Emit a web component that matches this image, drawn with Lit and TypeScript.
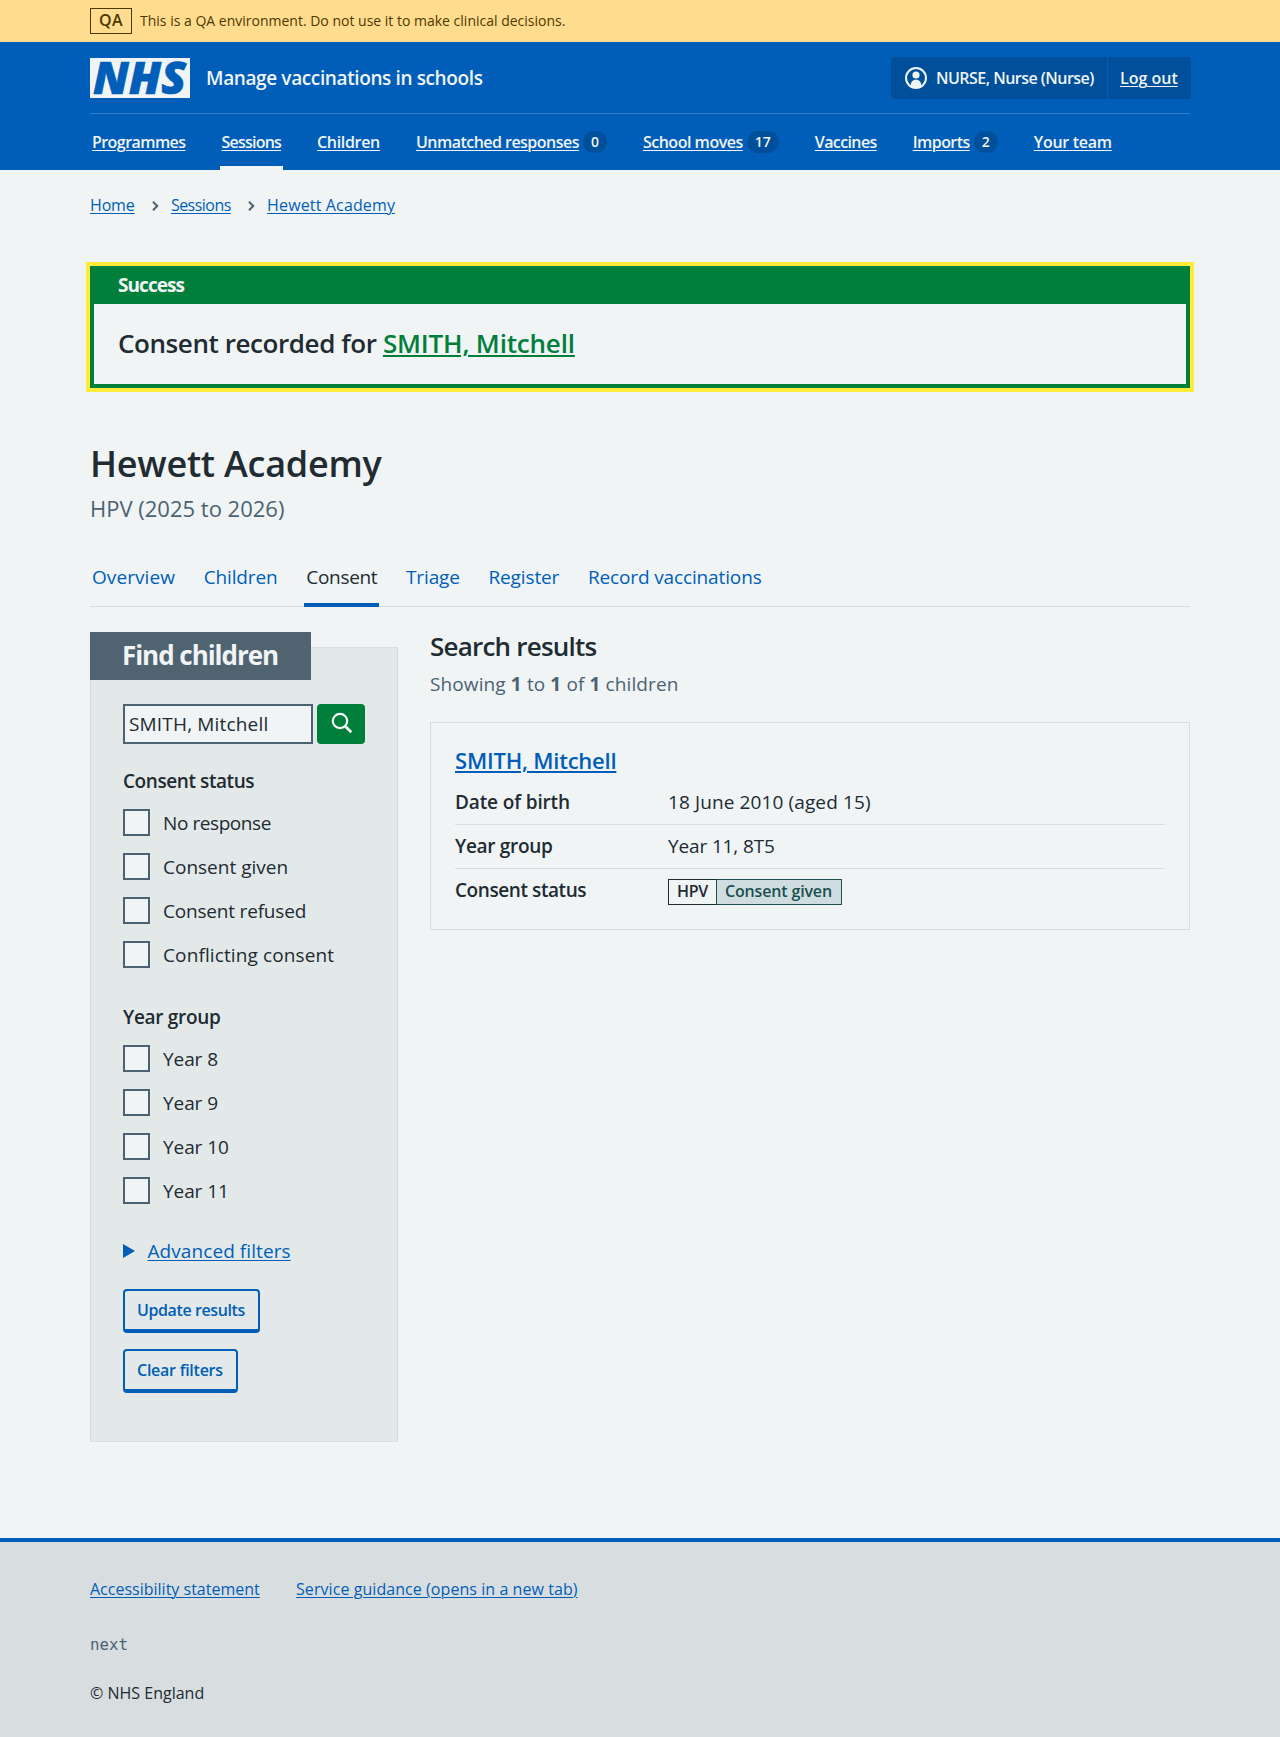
import { LitElement, html, css } from "lit";
import { customElement } from "lit/decorators.js";
import { classMap } from "lit/directives/class-map.js";

interface Item {
  label: string;
  /** tracking class */
  c: string;
  count?: string;
  current?: boolean;
}

const NAV: Item[] = [
  { label: "Programmes", c: "n35" },
  { label: "Sessions", c: "n49", current: true },
  { label: "Children", c: "n20" },
  { label: "Unmatched responses", c: "n33", count: "0" },
  { label: "School moves", c: "n30", count: "17" },
  { label: "Vaccines", c: "n38" },
  { label: "Imports", c: "n35", count: "2" },
  { label: "Your team", c: "n18" },
];
const TABS: Item[] = [
  { label: "Overview", c: "p4" },
  { label: "Children", c: "n6" },
  { label: "Consent", c: "n16", current: true },
  { label: "Triage", c: "n6" },
  { label: "Register", c: "n6" },
  { label: "Record vaccinations", c: "n6" },
];
const STATUSES: Item[] = [
  { label: "No response", c: "n22" },
  { label: "Consent given", c: "" },
  { label: "Consent refused", c: "n10" },
  { label: "Conflicting consent", c: "p6" },
];
const YEARS: Item[] = ["Year 8", "Year 9", "Year 10", "Year 11"].map((label) => ({ label, c: "n4" }));

@customElement("app-root")
export class AppRoot extends LitElement {
  static styles = css`
    :host { display: block; min-height: 1737px; background: #f0f4f5; color: #212b32; font-family: "Open Sans", "Noto Sans", sans-serif; font-size: 19px; line-height: 28px; }
    * { box-sizing: border-box; }
    h1, h2, h3, p, ul, dl, dd, dt { margin: 0; padding: 0; font-weight: inherit; font-size: inherit; }
    ul { list-style: none; }
    a { color: #005eb8; text-underline-offset: 1.5px; text-decoration-thickness: 1px; white-space: nowrap; }
    span, h1, h2, h3 { white-space: nowrap; }
    .p4 { letter-spacing: 0.004em; }
    .p6 { letter-spacing: 0.006em; }
    .p9 { letter-spacing: 0.009em; }
    .n4 { letter-spacing: -0.004em; }
    .n6 { letter-spacing: -0.007em; }
    .n10 { letter-spacing: -0.01em; }
    .n16 { letter-spacing: -0.016em; }
    .n18 { letter-spacing: -0.018em; }
    .n20 { letter-spacing: -0.02em; }
    .n22 { letter-spacing: -0.022em; }
    .n25 { letter-spacing: -0.025em; }
    .n30 { letter-spacing: -0.03em; }
    .n33 { letter-spacing: -0.033em; }
    .n35 { letter-spacing: -0.035em; }
    .n38 { letter-spacing: -0.038em; }
    .n40 { letter-spacing: -0.04em; }
    .n49 { letter-spacing: -0.049em; }
    .wrap { width: 1100px; margin: 0 auto; }
    .env { height: 42px; background: #ffdc8e; color: #4d3900; }
    .env .wrap { display: flex; align-items: center; gap: 8px; height: 42px; font-size: 14px; }
    .envtag { width: 42px; height: 26px; border: 1px solid #4d3900; text-align: center; line-height: 23px; font-size: 16px; font-weight: 600; letter-spacing: 0.02em; }
    .head { height: 128px; background: #005eb8; color: #f0f4f5; }
    .head a { color: #f0f4f5; }
    .top { height: 72px; padding-top: 15px; border-bottom: 1px solid #337ec6; display: flex; }
    .logo { display: block; margin-top: 1px; overflow: visible; }
    .service { margin: 6.5px 0 0 16px; font-weight: 600; }
    .account { margin: 0 -1px 0 auto; width: 300px; height: 42px; border-radius: 4px; background: #004f9a; display: flex; font-size: 16px; font-weight: 600; line-height: 42px; }
    .user { width: 217px; border-right: 1px solid #005eb8; padding-left: 14px; display: flex; align-items: center; gap: 9px; }
    .out { padding-left: 12px; }
    .nav { display: flex; gap: 32px; font-size: 16px; font-weight: 600; height: 56px; }
    .nav li { display: flex; align-items: center; gap: 4px; padding: 3px 2px 0; border-bottom: 4px solid transparent; }
    .nav li.current { border-bottom-color: #f0f4f5; }
    .count { height: 22px; min-width: 24px; padding: 0 8px; border-radius: 12px; background: #004f9a; font-size: 14px; line-height: 22px; text-align: center; }
    .crumbs { display: flex; align-items: flex-start; font-size: 16px; line-height: 24px; padding-top: 23px; height: 96px; }
    .chev { width: 7px; height: 10px; margin: 7.5px 12.3px 0 17px; }
    .banner { height: 122px; border: 4px solid #007f3b; border-top: 0; outline: 4px solid #ffeb3b; }
    .bhead { height: 38px; padding-left: 24px; background: #007f3b; color: #f0f4f5; font-weight: 700; line-height: 39px; }
    .bbody { padding: 21px 24px; font-size: 26px; line-height: 36px; font-weight: 600; }
    .bbody a { color: #007f3b; text-decoration-thickness: 2px; text-underline-offset: 2px; }
    .title { margin-top: 54px; font-size: 36px; font-weight: 600; line-height: 44px; }
    .caption { font-size: 22px; line-height: 32px; color: #4c6272; margin-top: 6px; }
    .tabrow { margin-top: 32px; height: 51px; box-shadow: inset 0 -1px #d8dde0; display: flex; gap: 24.7px; }
    .tabrow li { padding: 7px 2px 0; color: #005eb8; border-bottom: 4px solid transparent; }
    .tabrow li.current { color: #212b32; border-color: #005eb8; }
    .cols { display: grid; grid-template-columns: 308px 760px; gap: 32px; align-items: start; margin-top: 25px; }
    .side { margin-top: 15px; height: 795px; border: 1px solid #d8dde0; background: #e3e9e9; padding: 0 32px; }
    .sidehead { width: 221px; height: 48px; margin: -16px 0 0 -33px; padding-left: 32px; background: #4f6371; color: #f0f4f5; font-size: 26px; font-weight: 700; line-height: 46px; }
    .search { display: flex; gap: 4px; margin-top: 24px; }
    .input { width: 190px; height: 40px; border: 2px solid #4c6272; background: #f0f4f5; padding-left: 4px; line-height: 36px; }
    .go { width: 48px; height: 40px; border-radius: 4px; background: #007f3b; }
    .go svg { display: block; }
    .legend { font-weight: 600; margin-top: 23px; }
    .checks { display: grid; gap: 17px; margin-top: 14px; }
    .checks li { display: flex; gap: 13px; height: 27px; }
    .box { width: 27px; height: 27px; border: 2px solid #4c6272; background: #f0f4f5; }
    .checks + .legend { margin-top: 34.5px; }
    .checks .lab { line-height: 29px; }
    .more { display: flex; align-items: center; margin-top: 33px; gap: 12.5px; }
    .btn { display: block; height: 44px; border: 2px solid #005eb8; border-bottom-width: 4px; border-radius: 4px; color: #005eb8; font-size: 16px; font-weight: 600; line-height: 38px; padding-left: 12px; }
    .b1 { width: 137px; margin-top: 24.5px; }
    .b2 { width: 115px; margin-top: 16px; }
    .h2 { font-size: 26px; font-weight: 600; line-height: 36px; margin-top: -4px; }
    .showing { color: #4c6272; margin-top: 6px; }
    .showing b { font-weight: 700; }
    .card { margin-top: 24px; height: 208px; border: 1px solid #d8dde0; padding: 22px 24px; }
    .name { font-size: 22px; font-weight: 600; line-height: 30px; margin-bottom: 2px; }
    .name a { text-decoration-thickness: 2px; }
    .row { display: grid; grid-template-columns: 213px 1fr; height: 44px; border-bottom: 1px solid #d8dde0; line-height: 42px; }
    .row:first-child { height: 48px; padding-top: 4px; }
    .row:last-child { border: 0; }
    .k { font-weight: 600; }
    .tag { display: flex; padding-top: 10px; font-size: 16px; font-weight: 600; line-height: 23px; }
    .t1 { width: 49px; height: 26px; border: 1px solid #212b32; padding-left: 8px; border-right-color: #1b4f50; }
    .t2 { width: 125px; height: 26px; border: 1px solid #1b4f50; border-left: 0; background: #cfdde1; color: #1b4f50; padding-left: 8px; }
    .foot { margin-top: 96px; height: 199px; border-top: 4px solid #005eb8; background: #d8dde0; font-size: 16px; line-height: 24px; }
    .links { display: flex; gap: 36.3px; padding-top: 34.5px; height: 59px; }
    .ver { margin-top: 32px; font-family: "DejaVu Sans Mono", monospace; font-size: 15.8px; color: #4c6272; }
    .copy { margin-top: 24px; }
  `;

  chevron() {
    return html`<svg class="chev" viewBox="0 0 7 10"><path d="M1 .8 5.2 5 1 9.2" fill="none" stroke="#4c6272" stroke-width="2"/></svg>`;
  }

  checks(items: Item[]) {
    return html`<ul class="checks">${items.map((t) => html`<li><span class="box"></span><span class="lab ${t.c}">${t.label}</span></li>`)}</ul>`;
  }

  render() {
    return html`
      <div class="env"><div class="wrap"><span class="envtag">QA</span><span>This is a QA environment. Do not use it to make clinical decisions.</span></div></div>
      <header class="head"><div class="wrap">
        <div class="top">
          <svg class="logo" width="100" height="40" viewBox="0 0 100 40"><rect width="100" height="40" fill="#f0f4f5"/><text x="3" y="36" font-family="Open Sans" font-weight="800" font-style="italic" font-size="45" fill="#005eb8" stroke="#005eb8" stroke-width=".7" textLength="93" lengthAdjust="spacingAndGlyphs">NHS</text></svg>
          <span class="service n20">Manage vaccinations in schools</span>
          <div class="account">
            <div class="user"><svg width="22" height="22" viewBox="0 0 22 22"><circle cx="11" cy="11" r="10" fill="none" stroke="#f0f4f5" stroke-width="2"/><circle cx="11" cy="8" r="3.6" fill="#f0f4f5"/><path d="M5.8 19v-1.2a5.2 5.2 0 0 1 10.4 0V19a10 10 0 0 1-10.4 0Z" fill="#f0f4f5"/></svg><span class="n33">NURSE, Nurse (Nurse)</span></div>
            <a class="out" href="#">Log out</a>
          </div>
        </div>
        <ul class="nav">${NAV.map((n) => html`<li class=${classMap({ current: !!n.current })}><a class=${n.c} href="#">${n.label}</a>${n.count ? html`<span class="count">${n.count}</span>` : ""}</li>`)}</ul>
      </div></header>
      <main class="wrap">
        <div class="crumbs"><a href="#" class="n10">Home</a>${this.chevron()}<a href="#" class="n33">Sessions</a>${this.chevron()}<a href="#" class="p9">Hewett Academy</a></div>
        <div class="banner"><div class="bhead"><span class="n49">Success</span></div><div class="bbody"><span class="n16">Consent recorded for </span><a href="#" class="n6">SMITH, Mitchell</a></div></div>
        <h1 class="title"><span class="n6">Hewett Academy</span></h1>
        <p class="caption"><span>HPV (2025 to 2026)</span></p>
        <ul class="tabrow">${TABS.map((t) => html`<li class=${classMap({ current: !!t.current })}><span class=${t.c}>${t.label}</span></li>`)}</ul>
        <div class="cols">
          <section class="side">
            <h2 class="sidehead"><span class="n40">Find children</span></h2>
            <div class="search"><div class="input"><span class="p9">SMITH, Mitchell</span></div><div class="go"><svg width="48" height="40" viewBox="0 0 48 40"><circle cx="23" cy="17" r="7.2" fill="none" stroke="#f0f4f5" stroke-width="2.2"/><path d="M28 22l6.3 6.3" stroke="#f0f4f5" stroke-width="2.8"/></svg></div></div>
            <h3 class="legend"><span class="n22">Consent status</span></h3>
            ${this.checks(STATUSES)}
            <h3 class="legend"><span class="n16">Year group</span></h3>
            ${this.checks(YEARS)}
            <div class="more"><svg width="12" height="14" viewBox="0 0 12 14"><path d="M0 0l12 7L0 14Z" fill="#005eb8"/></svg><a href="#" class="p4">Advanced filters</a></div>
            <div class="btn b1"><span class="n25">Update results</span></div>
            <div class="btn b2"><span class="n16">Clear filters</span></div>
          </section>
          <section>
            <h2 class="h2"><span class="n30">Search results</span></h2>
            <p class="showing"><span class="p6">Showing <b>1</b> to <b>1</b> of <b>1</b> children</span></p>
            <div class="card">
              <h3 class="name"><a href="#" class="n10">SMITH, Mitchell</a></h3>
              <dl>
                <div class="row"><dt class="k"><span class="n6">Date of birth</span></dt><dd><span class="p6">18 June 2010 (aged 15)</span></dd></div>
                <div class="row"><dt class="k"><span class="n16">Year group</span></dt><dd><span class="n6">Year 11, 8T5</span></dd></div>
                <div class="row"><dt class="k"><span class="n22">Consent status</span></dt><dd class="tag"><span class="t1"><span class="n18">HPV</span></span><span class="t2"><span class="n10">Consent given</span></span></dd></div>
              </dl>
            </div>
          </section>
        </div>
      </main>
      <footer class="foot"><div class="wrap">
        <div class="links"><a href="#">Accessibility statement</a><a href="#" class="p4">Service guidance (opens in a new tab)</a></div>
        <p class="ver"><span>next</span></p>
        <p class="copy"><span>© NHS England</span></p>
      </div></footer>`;
  }
}
